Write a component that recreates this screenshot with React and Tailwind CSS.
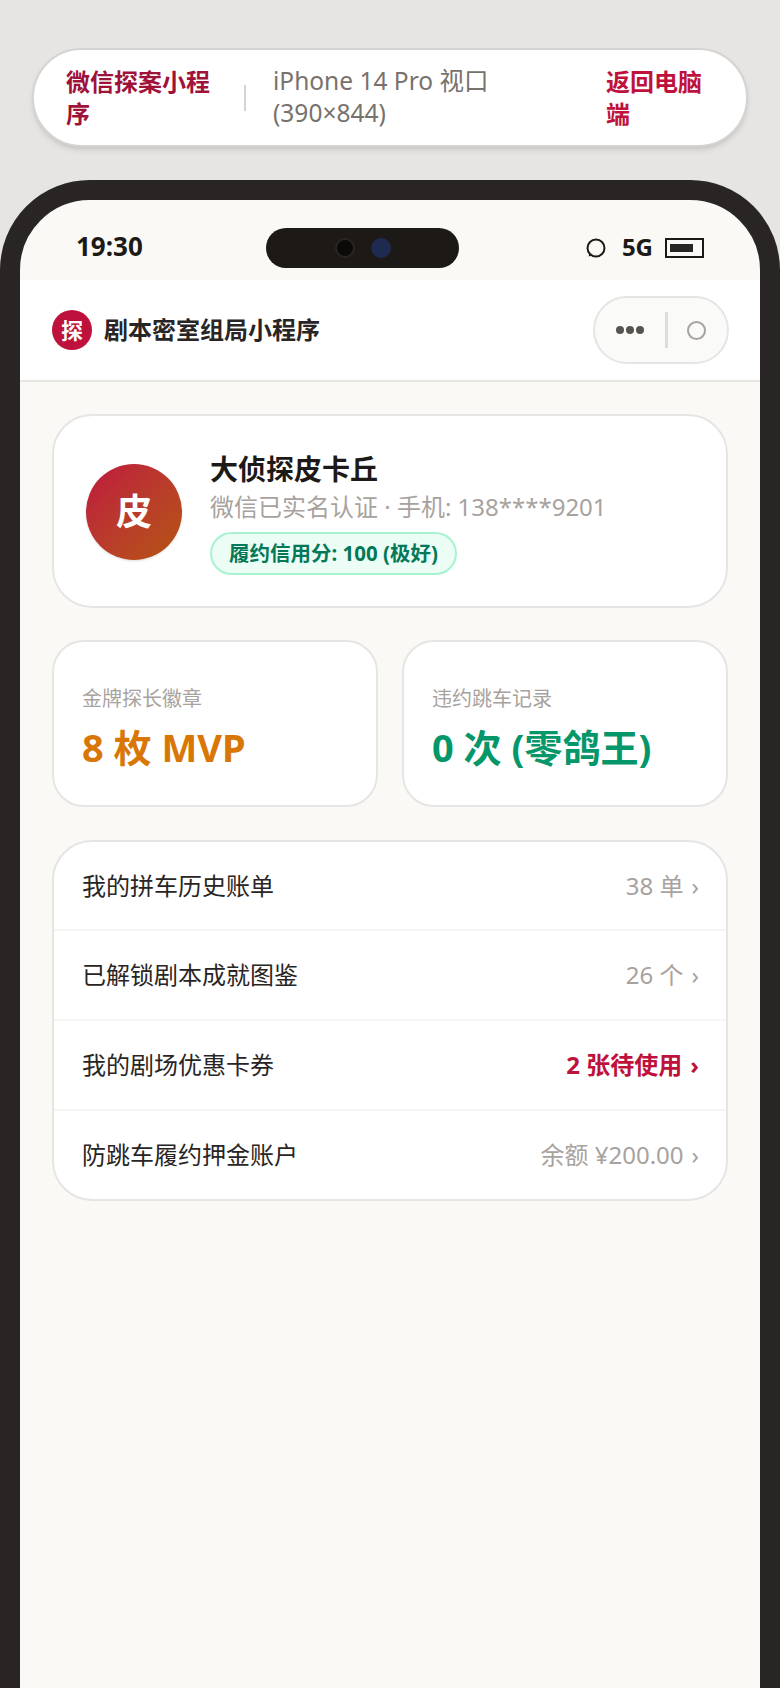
import React from "react";

const font = { fontFamily: '"Noto Sans", "Noto Sans CJK SC", sans-serif' };

const rows = [
    { label: "我的拼车历史账单", value: "38 单", h: "h-[89px]" },
    { label: "已解锁剧本成就图鉴", value: "26 个", h: "h-[90px]" },
    { label: "我的剧场优惠卡券", value: "2 张待使用", h: "h-[90px]", hot: true },
    { label: "防跳车履约押金账户", value: "余额 ¥200.00", h: "h-[88px]" },
];

function TopBar() {
    return (
        <div className="mx-[32px] h-[99px] rounded-[50px] bg-white border-2 border-[#d6d3d1] shadow-md flex items-center pl-[32px] pr-[30px] text-2xl leading-8">
            <div className="w-[150px] font-bold text-[#9f1239]">微信探案小程序</div>
            <div className="ml-[28px] w-[2px] h-[26px] bg-[#d6d3d1]"></div>
            <div className="ml-[27px] flex-1 pb-[2px] text-[24.5px] text-[#78716c]">
                iPhone 14 Pro 视口
                <br />
                (390×844)
            </div>
            <div className="w-[110px] font-bold text-[#be123c]">返回电脑端</div>
        </div>
    );
}

function SignalRing() {
    return (
        <svg width="20" height="20" viewBox="0 0 20 20" fill="none" className="text-[#1c1917]">
            <circle cx="10" cy="10" r="8.5" stroke="currentColor" strokeWidth="2" />
            <path d="M3.5 15.5 L2.5 18.5 L6 17.5" fill="currentColor" />
        </svg>
    );
}

function StatusBar() {
    return (
        <div className="h-[80px] flex items-center justify-between pt-[16px] pl-[56px] pr-[56px] relative">
            <div className="pb-[4px] text-[26px] leading-[32px] font-bold text-[#1c1917]">19:30</div>
            <div className="absolute left-[246px] top-[28px] w-[193px] h-[40px] rounded-[20px] bg-[#1c1917] flex items-center justify-center gap-[16px]">
                <div className="w-[20px] h-[20px] rounded-full bg-[#0c0a09] border-2 border-[#292524]"></div>
                <div className="w-[20px] h-[20px] rounded-full bg-[#1e2a4f]"></div>
            </div>
            <div className="flex items-center">
                <SignalRing />
                <div className="ml-[16px] pb-[2px] text-[24px] leading-[32px] font-bold text-[#1c1917]">5G</div>
                <div className="ml-[12px] w-[39px] h-[20px] border-2 border-[#1c1917] py-[4px] pl-[3px] pr-[9px] flex">
                    <div className="flex-1 bg-[#292524]"></div>
                </div>
            </div>
        </div>
    );
}

function NavBar() {
    return (
        <div className="h-[102px] bg-white border-b-2 border-[#e7e5e4] flex items-center justify-between pl-[32px] pr-[31px]">
            <div className="flex items-center gap-[12px]">
                <div className="w-[40px] h-[40px] rounded-full bg-[#be123c] text-white font-bold text-[22px] flex items-center justify-center">探</div>
                <div className="text-[24px] leading-[32px] font-bold text-[#292524]">剧本密室组局小程序</div>
            </div>
            <div className="w-[136px] h-[68px] rounded-[34px] bg-[#fafaf9] border-2 border-[#e7e5e4] flex items-center pl-[21px]">
                <div className="flex gap-[2px]">
                    <div className="w-[8px] h-[8px] rounded-full bg-[#57534e]"></div>
                    <div className="w-[8px] h-[8px] rounded-full bg-[#57534e]"></div>
                    <div className="w-[8px] h-[8px] rounded-full bg-[#57534e]"></div>
                </div>
                <div className="ml-[21px] w-[3px] h-[36px] bg-[#e0dcd9]"></div>
                <div className="ml-[19px] w-[19px] h-[19px] rounded-full border-2 border-[#a8a29e]"></div>
            </div>
        </div>
    );
}

function Profile() {
    return (
        <div className="h-[194px] rounded-[40px] bg-white border-2 border-[#e7e5e4] flex items-center pl-[32px]">
            <div className="mt-[2px] w-[96px] h-[96px] rounded-full bg-gradient-to-br from-[#be123c] to-[#b45309] text-white font-bold text-[36px] flex items-center justify-center shadow-sm">皮</div>
            <div className="ml-[28px] pt-[2px]">
                <div className="text-[28px] leading-[38px] font-bold text-[#1c1917]">大侦探皮卡丘</div>
                <div className="text-[24px] leading-[38px] text-[#a8a29e]">微信已实名认证 · 手机: 138****9201</div>
                <div className="mt-[6px] inline-flex h-[43px] items-center px-[17px] rounded-[22px] bg-[#ecfdf5] border-2 border-[#a7f3d0] text-[20.5px] font-bold text-[#047857]">履约信用分: 100 (极好)</div>
            </div>
        </div>
    );
}

function Stat({ label, value, color }) {
    return (
        <div className="h-[167px] rounded-[32px] bg-white border-2 border-[#e7e5e4] pl-[28px] pt-[43px]">
            <div className="text-[20px] leading-[28px] text-[#a8a29e]">{label}</div>
            <div className={"mt-[10px] text-[38px] leading-[48px] font-bold " + color}>{value}</div>
        </div>
    );
}

export default function App() {
    return (
        <div className="w-[780px] h-[1688px] overflow-hidden bg-[#e7e5e4] pt-[48px]" style={font}>
            <TopBar />
            <div className="mt-[33px] h-[1728px] rounded-t-[90px] border-[20px] border-[#292524] bg-[#faf9f6] overflow-hidden">
                <StatusBar />
                <NavBar />
                <div className="pt-[32px] px-[32px]">
                    <Profile />
                    <div className="mt-[32px] grid grid-cols-2 gap-[24px]">
                        <Stat label="金牌探长徽章" value="8 枚 MVP" color="text-[#d97706]" />
                        <Stat label="违约跳车记录" value="0 次 (零鸽王)" color="text-[#059669]" />
                    </div>
                    <div className="mt-[33px] rounded-[40px] bg-white border-2 border-[#e7e5e4] overflow-hidden">
                        {rows.map((r, i) => (
                            <div key={r.label} className={"flex items-center justify-between pl-[28px] pr-[27px] text-[24px] " + r.h + " " + (i < 3 ? "border-b-2 border-[#f5f5f4]" : "")}>
                                <div className="text-[#292524]">{r.label}</div>
                                <div className={r.hot ? "font-bold text-[#be123c]" : "text-[#a8a29e]"}>
                                    {r.value}
                                    <span className="ml-[8px]">›</span>
                                </div>
                            </div>
                        ))}
                    </div>
                </div>
            </div>
        </div>
    );
}
